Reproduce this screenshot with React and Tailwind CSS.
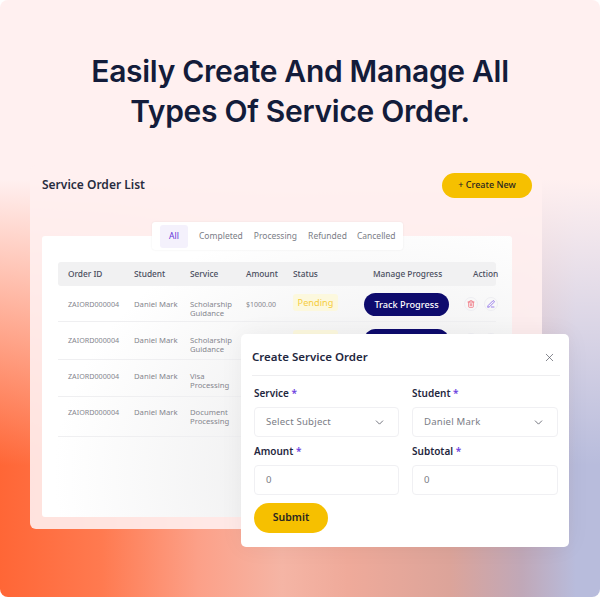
import React from "react";
import { ChevronDown, X, Trash2, PenLine } from "lucide-react";

const cols = "grid grid-cols-[66px_56px_56px_47px_71px_100px_34px]";

const rows = [
  { h: "h-[36px]", pt: "pt-[13px]", s: ["Scholarship", "Guidance"], amount: true, text: true, status: true },
  { h: "h-[38px]", pt: "pt-[13px]", s: ["Scholarship", "Guidance"], status: true },
  { h: "h-[37px]", pt: "pt-[11px]", s: ["Visa", "Processing"] },
  { h: "h-[40px]", pt: "pt-[10px]", s: ["Document", "Processing"] },
];

function Row({ r }) {
  return (
    <div className={`${cols} ${r.h} ${r.pt} px-[10px] border-b border-[#efeff1] text-[7.7px] leading-[9.3px] text-[#85868e]`}>
      <div className="pt-[1px] text-[7.2px]">ZAIORD000004</div>
      <div className="pt-[1px]">Daniel Mark</div>
      <div className="pt-[1px]">
        <div>{r.s[0]}</div>
        <div>{r.s[1]}</div>
      </div>
      <div className="pt-[1px] text-[7px]">{r.amount && "$1000.00"}</div>
      <div className="-mt-[5px]">
        {r.status && (
          <span className="inline-flex h-[17px] w-[45px] items-center justify-center rounded-[3px] bg-[#fcf8de] text-[9.2px] text-[#f6cd3f]">
            {r.text && "Pending"}
          </span>
        )}
      </div>
      <div className="-mt-[6px]">
        {r.status && (
          <span className="inline-flex h-[23px] w-[85px] items-center justify-center rounded-full bg-[#0e0b6d] text-[9.2px] font-medium text-white">
            {r.text && "Track Progress"}
          </span>
        )}
      </div>
      <div className="-mt-[2px] flex gap-[6px]">
        {r.status && (
          <>
            <span className="flex h-[14px] w-[14px] shrink-0 items-center justify-center rounded-full border border-[#eeeef2]">
              <Trash2 size={8} strokeWidth={2.4} className="text-[#f0707c]" />
            </span>
            <span className="flex h-[14px] w-[14px] shrink-0 items-center justify-center rounded-full border border-[#eeeef2]">
              <PenLine size={8} strokeWidth={2.2} className="text-[#7a55e6]" />
            </span>
          </>
        )}
      </div>
    </div>
  );
}

function Field({ label, value, select }) {
  return (
    <div>
      <div className="text-[10px] font-semibold leading-[12px] text-[#1f2740]">
        {label} <span className="text-[#6d3fe0]">*</span>
      </div>
      <div className="mt-[8px] flex h-[30px] items-center justify-between rounded-[4px] border border-[#f0f0f3] bg-white pl-[11px] pr-[12px] text-[9.6px] text-[#7b7d86]">
        <span className="tracking-[0.2px]">{value}</span>
        {select && <ChevronDown size={13} strokeWidth={1.5} className="text-[#555863]" />}
      </div>
    </div>
  );
}

export default function App() {
  return (
    <div className="bg-white">
      <div className="h-[597px] w-[600px] overflow-hidden rounded-[8px] bg-[linear-gradient(180deg,#fff0f0_30%,rgba(255,240,240,0)_78%),linear-gradient(90deg,#ff6636_0%,#ff7a50_17%,#fca088_33%,#f5b5a5_47%,#efaa9a_58%,#dca49a_75%,#c0a8b8_87%,#b8bcdc_96%)] font-['Noto_Sans','Open_Sans',sans-serif]">
        <h1 className="pt-[51px] text-center font-['Inter',sans-serif] text-[30px] font-semibold leading-[40px] tracking-[-0.3px] text-[#131c3a]">
          Easily Create And Manage All
          <br />
          Types Of Service Order.
        </h1>

        <div className="relative ml-[30px] mt-[34px] h-[364px] w-[512px] rounded-[6px] bg-[#fff0f0]/90">
          <div className="flex h-[40px] items-center justify-between pl-[12px] pr-[10px]">
            <div className="text-[12px] font-semibold text-[#282c40]">Service Order List</div>
            <button className="h-[25px] w-[90px] rounded-full bg-[#f6c000] text-[9px] font-medium text-[#2a2620]">+ Create New</button>
          </div>

          <div className="relative ml-[12px] mt-[31px] h-[281px] w-[470px] rounded-[3px] bg-[radial-gradient(ellipse_340px_270px_at_75%_85%,#e8e8e9_0%,#ffffff_100%)] px-[16px] pt-[26px]">
            <div className="absolute left-[110px] top-[-14px] flex h-[28px] w-[251px] items-center rounded-[3px] bg-white pl-[8px] text-[8.5px] text-[#7b7d86] shadow-[0_0_2px_rgba(0,0,0,0.08)]">
              <span className="flex h-[23px] w-[28px] items-center justify-center rounded-[3px] bg-[#f4f1fc] text-[#6334d8]">All</span>
              <span className="ml-[11px]">Completed</span>
              <span className="ml-[11px]">Processing</span>
              <span className="ml-[11px]">Refunded</span>
              <span className="ml-[10px]">Cancelled</span>
            </div>

            <div className={`${cols} h-[24px] items-center rounded-[3px] bg-[#f1f1f2] px-[10px] text-[8.3px] font-medium text-[#4a4e5e]`}>
              <div>Order ID</div>
              <div>Student</div>
              <div>Service</div>
              <div>Amount</div>
              <div>Status</div>
              <div className="pl-[9px]">Manage Progress</div>
              <div className="pl-[9px] whitespace-nowrap">Action</div>
            </div>
            {rows.map((r, i) => (
              <Row key={i} r={r} />
            ))}
          </div>

          <div className="absolute left-[211px] top-[169px] h-[213px] w-[328px] rounded-[5px] bg-white pl-[13px] pr-[11px] shadow-[0_0_24px_rgba(20,20,40,0.05)]">
            <div className="mx-[-2px] flex h-[42px] items-center justify-between border-b border-[#eeeef0] pr-[2px] pt-[4px]">
              <div className="text-[11.5px] font-semibold text-[#1f2740]">Create Service Order</div>
              <X size={13} strokeWidth={1.3} className="mr-[2px] mt-[2px] text-[#555863]" />
            </div>
            <div className="mt-[11px] grid grid-cols-[145px_146px] gap-x-[13px] gap-y-[8px]">
              <Field label="Service" value="Select Subject" select />
              <Field label="Student" value="Daniel Mark" select />
              <Field label="Amount" value="0" />
              <Field label="Subtotal" value="0" />
            </div>
            <button className="mt-[8px] h-[30px] w-[74px] rounded-full bg-[#f6c000] text-[10.5px] font-semibold text-[#2a2620]">Submit</button>
          </div>
        </div>
      </div>
    </div>
  );
}
